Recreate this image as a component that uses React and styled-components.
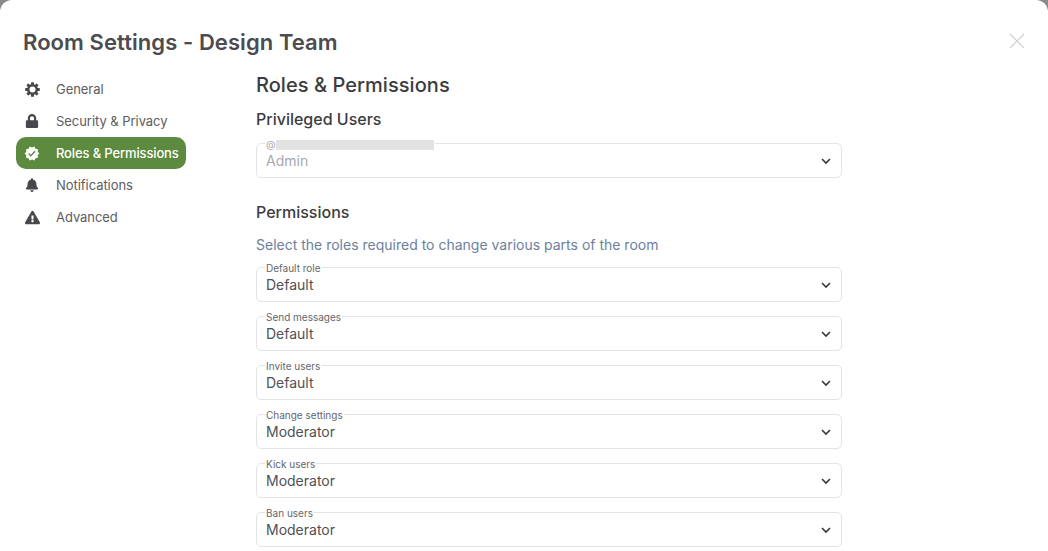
import React from "react";
import styled, { createGlobalStyle } from "styled-components";
import { FaLock, FaBell, FaExclamationTriangle } from "react-icons/fa";
import { MdVerified } from "react-icons/md";

const GlobalStyle = createGlobalStyle`
html, body {
    margin: 0;
    padding: 0;
    height: 100%;
    overflow: hidden;
    background: #8a8a8a;
}
body {
    font-family: "Inter", "Liberation Sans", sans-serif;
}
`

const Modal = styled.div`
width: 1048px;
height: 551px;
box-sizing: border-box;
overflow: hidden;
background: #fff;
border-radius: 12px 12px 0 0;
padding: 28px 23px 0 16px;
`

const Header = styled.header`
display: flex;
justify-content: space-between;
align-items: center;
height: 28px;
padding: 0 0 0 7px;
margin-bottom: 17px;
`

const Title = styled.h1`
margin: 0;
font-size: 22px;
line-height: 28px;
font-weight: 600;
letter-spacing: 0.07px;
color: #4b4b50;
`

const CloseButton = styled.button`
border: 0;
padding: 0;
background: none;
display: flex;
width: 16px;
height: 16px;
margin-bottom: 2px;
color: #cfcfcf;
`

const Body = styled.div`
display: flex;
align-items: flex-start;
`

const Sidebar = styled.nav`
width: 170px;
margin-right: 70px;
display: flex;
flex-direction: column;
`

const NavItem = styled.div`
display: flex;
align-items: center;
height: 32px;
width: 170px;
box-sizing: border-box;
padding-left: 8px;
border-radius: 10px;
font-size: 13px;
font-weight: ${(props) => (props.$active ? 500 : 400)};
letter-spacing: ${(props) => (props.$active ? "-0.14px" : "-0.05px")};
color: ${(props) => (props.$active ? "#fff" : "#5c5c61")};
background: ${(props) => (props.$active ? "#5c8a3e" : "transparent")};
`

const NavIcon = styled.span`
display: flex;
align-items: center;
justify-content: center;
width: 16px;
height: 16px;
margin-right: 16px;
color: ${(props) => (props.$active ? "#fff" : "#47474c")};
`

const Content = styled.main`
width: 586px;
margin-top: -1px;
`

const SectionTitle = styled.h2`
margin: 0 0 11px;
font-size: 20px;
line-height: 26px;
font-weight: 500;
letter-spacing: 0.05px;
color: #3c3c40;
`

const SubTitle = styled.h3`
margin: ${(props) => props.$top || 0}px 0 ${(props) => props.$gap || 0}px;
font-size: 16px;
line-height: 20px;
font-weight: 500;
color: #3c3c40;
`

const Hint = styled.p`
margin: 14px 0 13px;
font-size: 14px;
line-height: 18px;
color: #6c7f9e;
`

const Field = styled.fieldset`
margin: 0 0 14px;
padding: 0 9px 0 8px;
height: 35px;
box-sizing: border-box;
border: 1px solid #e4e4e6;
border-radius: 5px;
display: block;
min-width: 0;
`

const FieldLabel = styled.legend`
display: flex;
align-items: flex-start;
padding: 0 1px;
margin: 0;
height: 1px;
font-size: 10px;
line-height: 2px;
color: ${(props) => (props.$disabled ? "#a8a8ac" : "#66666b")};
`

const Redacted = styled.span`
display: block;
width: 158px;
height: 10px;
margin-top: -3px;
background: #e2e2e2;
`

const FieldRow = styled.div`
display: flex;
align-items: center;
justify-content: space-between;
height: 33px;
margin-left: 1px;
font-size: 14px;
color: ${(props) => (props.$disabled ? "#a8a8ac" : "#505055")};
`

const Chevron = styled.svg`
width: 12px;
height: 8px;
margin-top: 1px;
color: #38383c;
`

function GearIcon() {
    const teeth = [0, 45, 90, 135];
    return (
        <svg width="15" height="15" viewBox="0 0 15 15" fill="currentColor">
            {teeth.map((angle) => (
                <rect key={angle} x="6" y="0.2" width="3" height="14.6" rx="0.6" transform={`rotate(${angle} 7.5 7.5)`} />
            ))}
            <circle cx="7.5" cy="7.5" r="5.4" />
            <circle cx="7.5" cy="7.5" r="3" fill="#fff" />
        </svg>
    )
}

const navItems = [
    { label: "General", icon: <GearIcon /> },
    { label: "Security & Privacy", icon: <FaLock size={14} /> },
    { label: "Roles & Permissions", icon: <MdVerified size={17} />, active: true },
    { label: "Notifications", icon: <FaBell size={14} /> },
    { label: "Advanced", icon: <FaExclamationTriangle size={15} /> },
];

const permissions = [
    { label: "Default role", value: "Default" },
    { label: "Send messages", value: "Default" },
    { label: "Invite users", value: "Default" },
    { label: "Change settings", value: "Moderator" },
    { label: "Kick users", value: "Moderator" },
    { label: "Ban users", value: "Moderator" },
];

function ChevronIcon() {
    return (
        <Chevron viewBox="0 0 12 8" fill="none" stroke="currentColor" strokeWidth="1.6">
            <path d="M2 2l4 4 4-4" />
        </Chevron>
    )
}

function SelectField({ label, value, disabled, children }) {
    return (
        <Field>
            <FieldLabel $disabled={disabled}>{label}{children}</FieldLabel>
            <FieldRow $disabled={disabled}>
                {value}
                <ChevronIcon />
            </FieldRow>
        </Field>
    )
}

export default function App() {
    return (
        <>
            <GlobalStyle />
            <Modal>
                <Header>
                    <Title>Room Settings - Design Team</Title>
                    <CloseButton aria-label="Close">
                        <svg width="16" height="16" viewBox="0 0 16 16" fill="none" stroke="currentColor" strokeWidth="1.2">
                            <path d="M1 1l14 14M15 1L1 15" />
                        </svg>
                    </CloseButton>
                </Header>
                <Body>
                    <Sidebar>
                        {navItems.map((item) => (
                            <NavItem key={item.label} $active={item.active}>
                                <NavIcon $active={item.active}>{item.icon}</NavIcon>
                                {item.label}
                            </NavItem>
                        ))}
                    </Sidebar>
                    <Content>
                        <SectionTitle>Roles &amp; Permissions</SectionTitle>
                        <SubTitle $gap={14}>Privileged Users</SubTitle>
                        <SelectField label="@" value="Admin" disabled>
                            <Redacted />
                        </SelectField>
                        <SubTitle $top={24}>Permissions</SubTitle>
                        <Hint>Select the roles required to change various parts of the room</Hint>
                        {permissions.map((p) => (
                            <SelectField key={p.label} label={p.label} value={p.value} />
                        ))}
                    </Content>
                </Body>
            </Modal>
        </>
    )
}
